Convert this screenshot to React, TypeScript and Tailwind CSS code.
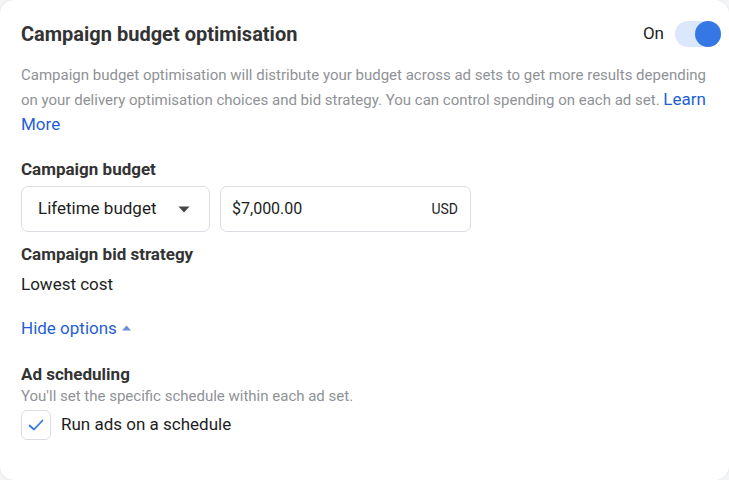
import React from "react";

function Toggle() {
  return (
    <div className="relative h-[26px] w-[46px] rounded-full bg-[#dbe7fc]">
      <div className="absolute right-0 top-0 h-[26px] w-[26px] rounded-full bg-[#3577e5]" />
    </div>
  );
}

export default function App() {
  return (
    <div className="h-[480px] w-[729px] bg-[#f4f5f7] font-['Roboto',sans-serif]">
      <div className="flex h-[480px] flex-col rounded-[14px] bg-white px-[21px] pt-[20px] shadow-[0_0_2px_rgba(0,0,0,0.12)]">
        <div className="-mr-[13px] flex items-center justify-between">
          <h1 className="text-[20px] font-bold leading-[28px] text-[#333]">Campaign budget optimisation</h1>
          <div className="flex items-center gap-[11px]">
            <span className="text-[17px] text-[#1c1e21]">On</span>
            <Toggle />
          </div>
        </div>

        <p className="mt-[15px] text-[15px] leading-[24px] text-[#8f9296]">
          Campaign budget optimisation will distribute your budget across ad sets to get more results depending on your
          delivery optimisation choices and bid strategy. You can control spending on each ad set.{" "}
          <span className="text-[17px] text-[#1f5fd6]">Learn More</span>
        </p>

        <h2 className="mt-[20px] text-[17px] font-bold leading-[24px] text-[#333]">Campaign budget</h2>
        <div className="mt-[5px] flex gap-[10px]">
          <div className="flex h-[46px] w-[189px] items-center justify-between rounded-[7px] border border-[#dadde1] pl-[16px] pr-[19px]">
            <span className="text-[17px] text-[#1c1e21]">Lifetime budget</span>
            <svg width="12" height="7" viewBox="0 0 12 7">
              <path d="M0.5 0.5h11L6 6.5z" fill="#444" />
            </svg>
          </div>
          <div className="flex h-[46px] w-[251px] items-center justify-between rounded-[7px] border border-[#dadde1] pl-[11px] pr-[12px]">
            <span className="text-[16px] text-[#1c1e21]">$7,000.00</span>
            <span className="text-[14px] text-[#1c1e21]">USD</span>
          </div>
        </div>

        <h2 className="mt-[10px] text-[17px] font-bold leading-[24px] text-[#333]">Campaign bid strategy</h2>
        <div className="mt-[6px] text-[17px] leading-[24px] text-[#1c1e21]">Lowest cost</div>

        <div className="mt-[20px] flex items-center gap-[5px] text-[17px] leading-[24px] text-[#1f5fd6]">
          <span>Hide options</span>
          <svg width="9" height="6" viewBox="0 0 9 6">
            <path d="M0 5.5h9L4.5 0.5z" fill="#6d8fd9" />
          </svg>
        </div>

        <h2 className="mt-[22px] text-[17px] font-bold leading-[24px] text-[#333]">Ad scheduling</h2>
        <div className="text-[15px] leading-[20px] text-[#8f9296]">You'll set the specific schedule within each ad set.</div>
        <div className="mt-[4px] flex items-center gap-[10px]">
          <div className="flex h-[30px] w-[30px] items-center justify-center rounded-[6px] border border-[#dadde1]">
            <svg width="16" height="12" viewBox="0 0 16 12">
              <path d="M1.5 6.5l4.5 4L14.5 1.5" fill="none" stroke="#3577e5" strokeWidth="1.8" strokeLinecap="round" strokeLinejoin="round" />
            </svg>
          </div>
          <span className="text-[17px] text-[#1c1e21]">Run ads on a schedule</span>
        </div>
      </div>
    </div>
  );
}
